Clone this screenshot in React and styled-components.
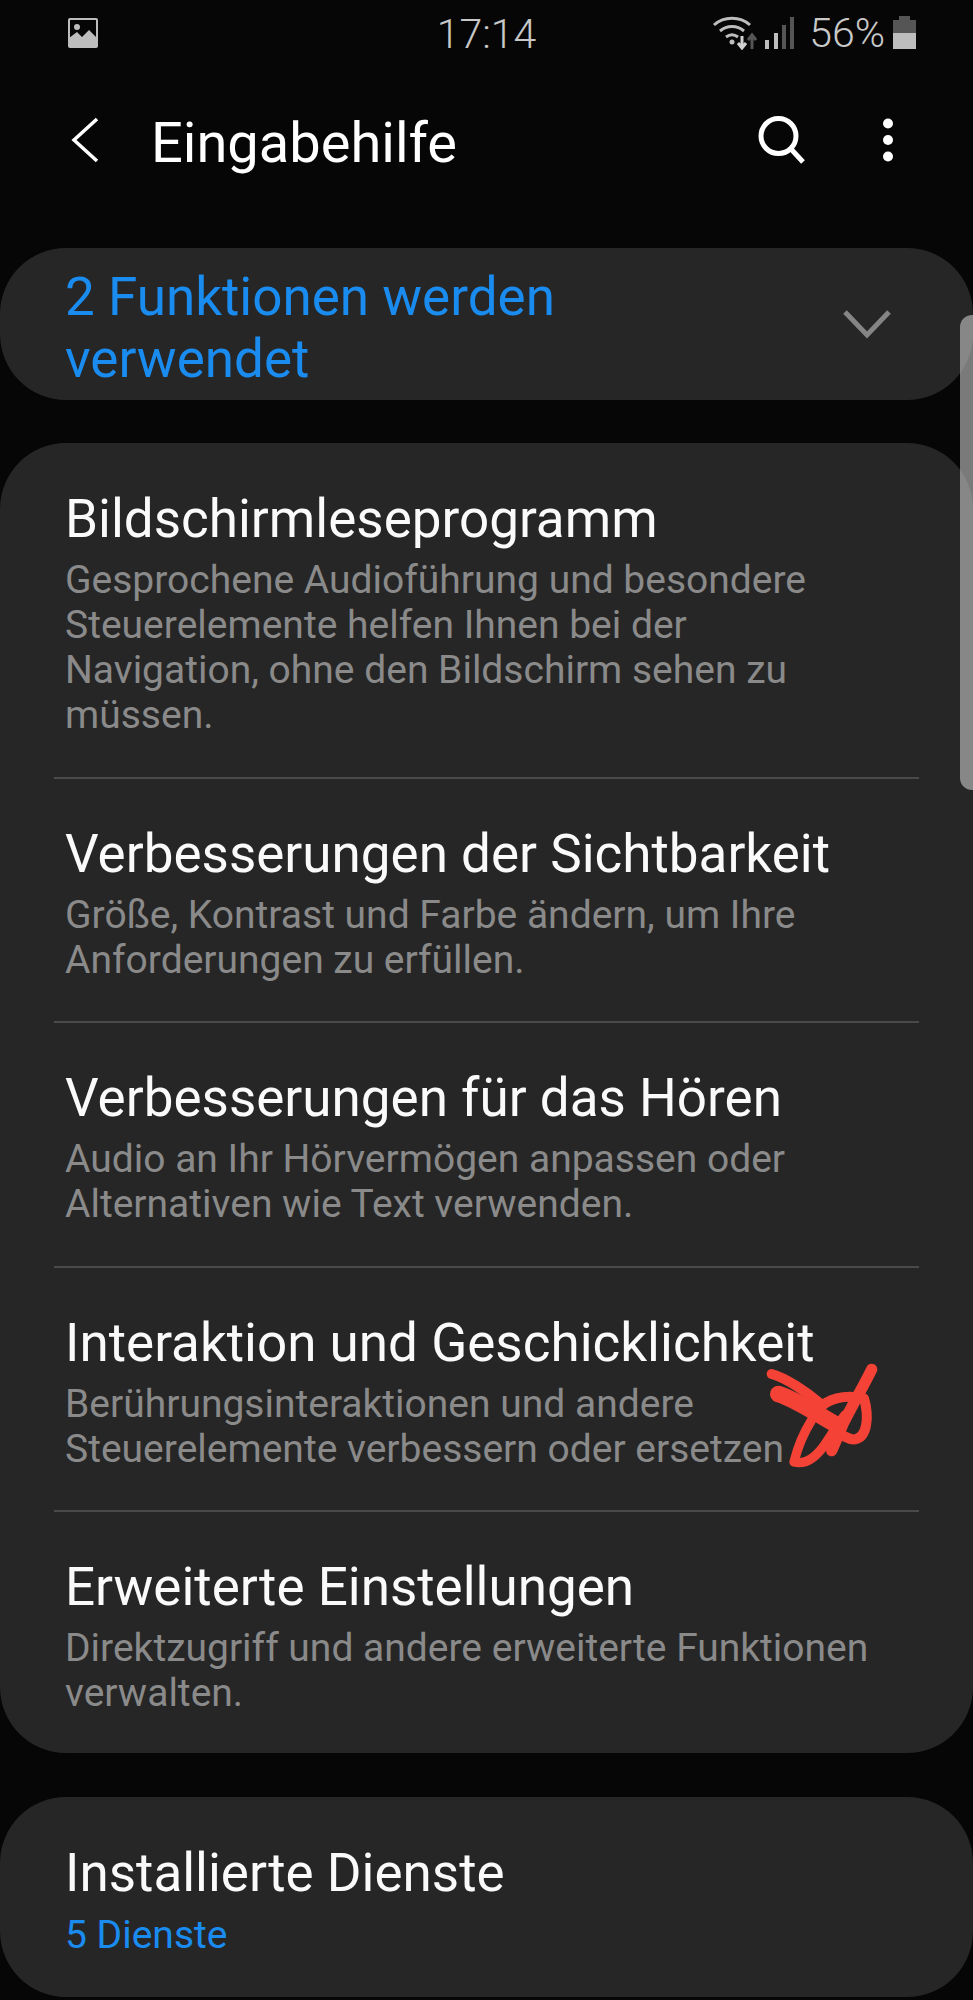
import React from "react";
import styled, { createGlobalStyle } from "styled-components";

const GlobalStyle = createGlobalStyle`
  html, body {
    margin: 0;
    padding: 0;
    background: #060606;
  }
  body {
    font-family: Roboto, "Noto Sans", sans-serif;
  }
`;

const Screen = styled.div`
  position: relative;
  width: 973px;
  height: 2000px;
  overflow: hidden;
  background: #060606;
  color: #fff;
`;

const StatusBar = styled.div`
  height: 66px;
  display: flex;
  align-items: center;
  padding: 0 57px 0 67px;
  position: relative;
  color: #c8c8c8;
`;

const StatusTime = styled.div`
  position: absolute;
  left: 0;
  right: 0;
  top: 12px;
  text-align: center;
  font-size: 41px;
  line-height: 45px;
  font-weight: 300;
`;

const StatusRight = styled.div`
  margin-left: auto;
  display: flex;
  align-items: center;
  gap: 8px;
  font-size: 41px;
  line-height: 45px;
  font-weight: 300;
`;

const StatusPercent = styled.span`
  margin-left: 7px;
`;

const Toolbar = styled.div`
  height: 148px;
  display: flex;
  align-items: center;
  padding: 0 80px 0 70px;
`;

const Title = styled.div`
  font-size: 56px;
  line-height: 66px;
  margin-left: 51px;
  padding-top: 6px;
  flex: 1;
`;

const ToolIcons = styled.div`
  display: flex;
  align-items: center;
  gap: 77px;
`;

const Card = styled.div`
  background: #262626;
  border-radius: 66px;
  margin-top: ${({ $top }) => $top}px;
`;

const Banner = styled(Card)`
  height: 152px;
  display: flex;
  align-items: center;
  justify-content: space-between;
  padding: 0 82px 0 65px;
  box-sizing: border-box;
`;

const BannerText = styled.div`
  color: #1a8cf0;
  font-size: 53px;
  line-height: 62px;
  width: 600px;
  padding-top: 8px;
`;

const Row = styled.div`
  margin: 0 54px;
  padding: ${({ $top }) => $top || 45}px 11px 0;
  height: ${({ $height }) => $height}px;
  box-sizing: border-box;
  border-bottom: ${({ $last }) => ($last ? "none" : "2px solid #4a4a4a")};
`;

const RowTitle = styled.div`
  font-size: 53px;
  line-height: 60px;
  color: #fafafa;
`;

const RowText = styled.div`
  font-size: 39px;
  line-height: 45px;
  color: #8a8a8a;
  margin-top: 9px;
  max-width: 815px;
`;

const RowLink = styled(RowText)`
  color: #1a8cf0;
  margin-top: 10px;
`;

const ScrollThumb = styled.div`
  position: absolute;
  top: 315px;
  right: 0;
  width: 13px;
  height: 475px;
  border-radius: 12px 0 0 12px;
  background: rgba(200, 200, 200, 0.6);
`;

const Scribble = styled.svg`
  position: absolute;
  left: 720px;
  top: 1320px;
`;

const rows = [
  {
    title: "Bildschirmleseprogramm",
    text: "Gesprochene Audioführung und besondere Steuerelemente helfen Ihnen bei der Navigation, ohne den Bildschirm sehen zu müssen.",
    height: 336,
    top: 46,
  },
  {
    title: "Verbesserungen der Sichtbarkeit",
    text: "Größe, Kontrast und Farbe ändern, um Ihre Anforderungen zu erfüllen.",
    height: 244,
  },
  {
    title: "Verbesserungen für das Hören",
    text: "Audio an Ihr Hörvermögen anpassen oder Alternativen wie Text verwenden.",
    height: 245,
  },
  {
    title: "Interaktion und Geschicklichkeit",
    text: "Berührungsinteraktionen und andere Steuerelemente verbessern oder ersetzen",
    height: 244,
  },
  {
    title: "Erweiterte Einstellungen",
    text: "Direktzugriff und andere erweiterte Funktionen verwalten.",
    height: 241,
    last: true,
  },
];

export default function App() {
  return (
    <>
      <GlobalStyle />
      <Screen>
        <StatusBar>
          <svg width="32" height="32" viewBox="0 0 32 32">
            <rect x="1" y="1" width="30" height="30" rx="2" fill="#bdbdbd" />
            <rect x="3" y="3" width="26" height="26" fill="#060606" />
            <path d="M2 30 V21 L10 15 L15 20 L22 13 L30 21 V30 Z" fill="#bdbdbd" />
            <circle cx="10" cy="10" r="3" fill="#bdbdbd" />
          </svg>
          <StatusTime>17:14</StatusTime>
          <StatusRight>
            <svg width="44" height="34" viewBox="0 0 44 34" fill="none">
              <path d="M1 9 C11 0 27 0 37 9" stroke="#bdbdbd" strokeWidth="3" />
              <path d="M7 15 C14 9 24 9 31 15" stroke="#bdbdbd" strokeWidth="3" />
              <path d="M13 21 C17 18 21 18 25 21" stroke="#bdbdbd" strokeWidth="3" />
              <circle cx="19" cy="26" r="2.5" fill="#bdbdbd" />
              <path d="M29 20 V31 M25 27 L29 32 L33 27" stroke="#d0d0d0" strokeWidth="3" />
              <path d="M39 33 V20 M35 24 L39 19 L43 24" stroke="#555" strokeWidth="3" />
            </svg>
            <svg width="29" height="34" viewBox="0 0 29 34">
              <rect x="0" y="24" width="4" height="9" fill="#bdbdbd" />
              <rect x="9" y="17" width="4" height="16" fill="#bdbdbd" />
              <rect x="17" y="9" width="4" height="24" fill="#555" />
              <rect x="25" y="1" width="4" height="32" fill="#555" />
            </svg>
            <StatusPercent>56%</StatusPercent>
            <svg width="23" height="34" viewBox="0 0 23 34">
              <rect x="6" y="0" width="11" height="5" fill="#555" />
              <rect x="0" y="4" width="23" height="13" fill="#555" />
              <rect x="0" y="17" width="23" height="16" fill="#bdbdbd" />
            </svg>
          </StatusRight>
        </StatusBar>
        <Toolbar>
          <svg width="30" height="46" viewBox="0 0 30 46" fill="none">
            <path d="M27 2 L4 23 L27 44" stroke="#fff" strokeWidth="3.5" />
          </svg>
          <Title>Eingabehilfe</Title>
          <ToolIcons>
            <svg width="48" height="48" viewBox="0 0 48 48" fill="none">
              <circle cx="20.5" cy="20" r="17.5" stroke="#fff" strokeWidth="5" />
              <path d="M33 33 L45 46" stroke="#fff" strokeWidth="5" />
            </svg>
            <svg width="10" height="44" viewBox="0 0 10 44">
              <circle cx="5" cy="5.5" r="5" fill="#fff" />
              <circle cx="5" cy="22" r="5" fill="#fff" />
              <circle cx="5" cy="38.5" r="5" fill="#fff" />
            </svg>
          </ToolIcons>
        </Toolbar>
        <Banner $top={34}>
          <BannerText>2 Funktionen werden verwendet</BannerText>
          <svg width="48" height="30" viewBox="0 0 48 30" fill="none">
            <path d="M2 3 L24 26 L46 3" stroke="#858585" strokeWidth="5" />
          </svg>
        </Banner>
        <Card $top={43}>
          {rows.map((row) => (
            <Row key={row.title} $height={row.height} $last={row.last} $top={row.top}>
              <RowTitle>{row.title}</RowTitle>
              <RowText>{row.text}</RowText>
            </Row>
          ))}
        </Card>
        <Card $top={44}>
          <Row $height={200} $last $top={46}>
            <RowTitle>Installierte Dienste</RowTitle>
            <RowLink>5 Dienste</RowLink>
          </Row>
        </Card>
        <ScrollThumb />
        <Scribble width="180" height="160" viewBox="0 0 540 480" fill="none">
          <g stroke="#f44336" strokeLinecap="round" strokeLinejoin="round">
            <path d="M155 162 C200 175 260 215 300 250" strokeWidth="30" />
            <path d="M175 222 C220 235 290 280 350 315" strokeWidth="50" />
            <path d="M455 148 C435 190 400 250 370 310 C355 345 345 370 335 392" strokeWidth="34" />
            <path d="M275 300 C250 340 232 385 222 426 C262 436 295 405 322 362 C340 335 355 310 375 285" strokeWidth="28" />
            <path d="M300 265 C320 238 370 222 432 235 C448 290 442 352 405 358 C385 360 365 345 345 330" strokeWidth="30" />
          </g>
        </Scribble>
      </Screen>
    </>
  );
}
